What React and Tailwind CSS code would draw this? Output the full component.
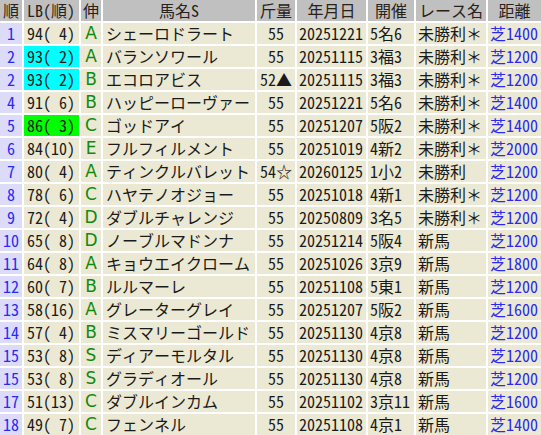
const rows = [
  ['1', '94( 4)', '', 'A', 'シェーロドラート', '55', '20251221', '5名6', '未勝利＊', '芝1400'],
  ['2', '93( 2)', 'cyan', 'A', 'バランソワール', '55', '20251115', '3福3', '未勝利＊', '芝1200'],
  ['2', '93( 2)', 'cyan', 'B', 'エコロアビス', '52▲', '20251115', '3福3', '未勝利＊', '芝1200'],
  ['4', '91( 6)', '', 'B', 'ハッピーローヴァー', '55', '20251221', '5名6', '未勝利＊', '芝1400'],
  ['5', '86( 3)', 'lime', 'C', 'ゴッドアイ', '55', '20251207', '5阪2', '未勝利＊', '芝1400'],
  ['6', '84(10)', '', 'E', 'フルフィルメント', '55', '20251019', '4新2', '未勝利＊', '芝2000'],
  ['7', '80( 4)', '', 'A', 'ティンクルバレット', '54☆', '20260125', '1小2', '未勝利', '芝1200'],
  ['8', '78( 6)', '', 'C', 'ハヤテノオジョー', '55', '20251018', '4新1', '未勝利＊', '芝1200'],
  ['9', '72( 4)', '', 'D', 'ダブルチャレンジ', '55', '20250809', '3名5', '未勝利＊', '芝1200'],
  ['10', '65( 8)', '', 'D', 'ノーブルマドンナ', '55', '20251214', '5阪4', '新馬', '芝1200'],
  ['11', '64( 8)', '', 'A', 'キョウエイクローム', '55', '20251026', '3京9', '新馬', '芝1800'],
  ['12', '60( 7)', '', 'B', 'ルルマーレ', '55', '20251108', '5東1', '新馬', '芝1200'],
  ['13', '58(16)', '', 'A', 'グレーターグレイ', '55', '20251207', '5阪2', '新馬', '芝1600'],
  ['14', '57( 4)', '', 'B', 'ミスマリーゴールド', '55', '20251130', '4京8', '新馬', '芝1200'],
  ['15', '53( 8)', '', 'S', 'ディアーモルタル', '55', '20251130', '4京8', '新馬', '芝1200'],
  ['15', '53( 8)', '', 'S', 'グラディオール', '55', '20251130', '4京8', '新馬', '芝1200'],
  ['17', '51(13)', '', 'C', 'ダブルインカム', '55', '20251102', '3京11', '新馬', '芝1600'],
  ['18', '49( 7)', '', 'C', 'フェンネル', '55', '20251108', '4京1', '新馬', '芝1400'],
];

const headers = ['順', 'LB(順)', '伸', '馬名S', '斤量', '年月日', '開催', 'レース名', '距離'];

const lbBg = { '': 'bg-[#ebe9d3]', cyan: 'bg-[#00ffff]', lime: 'bg-[#00ff00]' };

export default function App() {
  return (
    <div
      className="w-[541px] h-[435px] bg-white overflow-hidden text-[16px] leading-[21px] text-[#1a1a1a]"
      style={{ fontFamily: '"Noto Sans Mono CJK JP", "Noto Sans CJK JP", sans-serif' }}
    >
      <div className="grid grid-cols-[22px_55px_20px_152px_38px_69px_46px_70px_53px] auto-rows-[21px] gap-[2px]">
        {headers.map((h, i) => (
          <div
            key={h}
            className={`bg-[#c0c0c0] text-[#2a2218] whitespace-pre ${i === 1 ? 'pl-[3px]' : 'text-center'}`}
          >
            {h}
          </div>
        ))}
        {rows.map((r, i) => (
          <Row key={i} r={r} />
        ))}
      </div>
    </div>
  );
}

function Row({ r }) {
  const [no, lb, hl, nobi, name, kin, date, kaisai, race, dist] = r;
  return (
    <>
      <div className="bg-[#dcdcfa] text-[#2a2af0] text-center">{no}</div>
      <div className={`${lbBg[hl]} pl-[3px] whitespace-pre`}>{lb}</div>
      <div className="bg-[#ebe9d3] text-[#108a10] text-center font-[family-name:DejaVu_Sans] text-[17px]">{nobi}</div>
      <div className="bg-[#ebe9d3] pl-[3px] whitespace-nowrap overflow-hidden">{name}</div>
      <div className="bg-[#ebe9d3] text-center whitespace-nowrap">{kin}</div>
      <div className="bg-[#ebe9d3] pl-[2px]">{date}</div>
      <div className="bg-[#ebe9d3] pl-[2px] whitespace-nowrap">{kaisai}</div>
      <div className="bg-[#ebe9d3] pl-[2px] whitespace-nowrap">{race}</div>
      <div className="bg-[#ebe9d3] text-[#2a2af0] pl-[2px]">{dist}</div>
    </>
  );
}
